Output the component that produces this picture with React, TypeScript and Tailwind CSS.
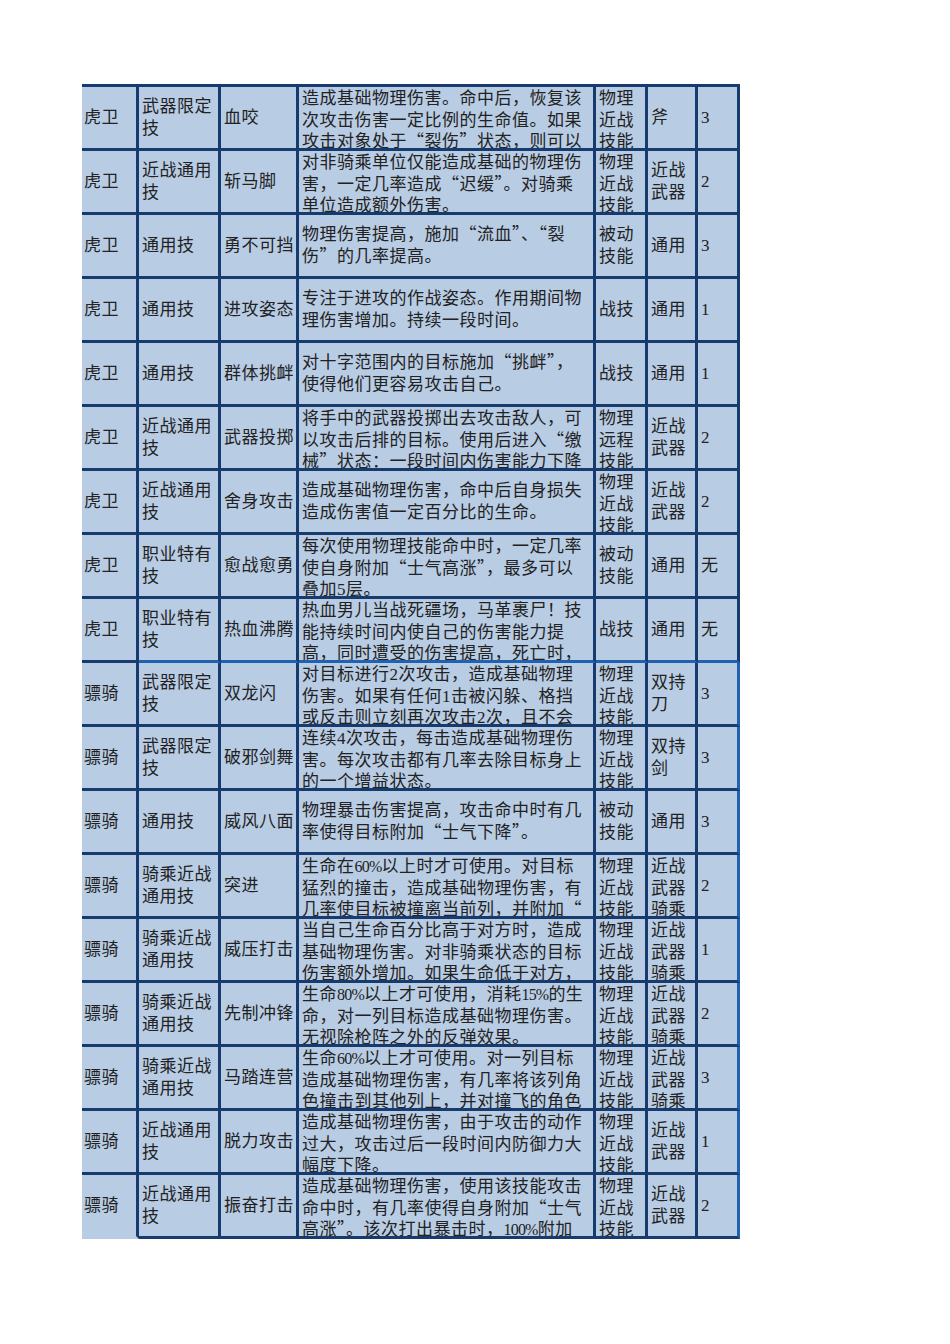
import React from "react";

type Row = {
  a: string;
  b: string[];
  c: string;
  d: string[];
  e: string[];
  f: string[];
  g: string;
};

const rows: Row[] = [
  { a: "虎卫", b: ["武器限定", "技"], c: "血咬", d: ["造成基础物理伤害。命中后，恢复该", "次攻击伤害一定比例的生命值。如果", "攻击对象处于“裂伤”状态，则可以"], e: ["物理", "近战", "技能"], f: ["斧"], g: "3" },
  { a: "虎卫", b: ["近战通用", "技"], c: "斩马脚", d: ["对非骑乘单位仅能造成基础的物理伤", "害，一定几率造成“迟缓”。对骑乘", "单位造成额外伤害。"], e: ["物理", "近战", "技能"], f: ["近战", "武器"], g: "2" },
  { a: "虎卫", b: ["通用技"], c: "勇不可挡", d: ["物理伤害提高，施加“流血”、“裂", "伤”的几率提高。"], e: ["被动", "技能"], f: ["通用"], g: "3" },
  { a: "虎卫", b: ["通用技"], c: "进攻姿态", d: ["专注于进攻的作战姿态。作用期间物", "理伤害增加。持续一段时间。"], e: ["战技"], f: ["通用"], g: "1" },
  { a: "虎卫", b: ["通用技"], c: "群体挑衅", d: ["对十字范围内的目标施加“挑衅”，", "使得他们更容易攻击自己。"], e: ["战技"], f: ["通用"], g: "1" },
  { a: "虎卫", b: ["近战通用", "技"], c: "武器投掷", d: ["将手中的武器投掷出去攻击敌人，可", "以攻击后排的目标。使用后进入“缴", "械”状态：一段时间内伤害能力下降"], e: ["物理", "远程", "技能"], f: ["近战", "武器"], g: "2" },
  { a: "虎卫", b: ["近战通用", "技"], c: "舍身攻击", d: ["造成基础物理伤害，命中后自身损失", "造成伤害值一定百分比的生命。"], e: ["物理", "近战", "技能"], f: ["近战", "武器"], g: "2" },
  { a: "虎卫", b: ["职业特有", "技"], c: "愈战愈勇", d: ["每次使用物理技能命中时，一定几率", "使自身附加“士气高涨”，最多可以", "叠加5层。"], e: ["被动", "技能"], f: ["通用"], g: "无" },
  { a: "虎卫", b: ["职业特有", "技"], c: "热血沸腾", d: ["热血男儿当战死疆场，马革裹尸！技", "能持续时间内使自己的伤害能力提", "高，同时遭受的伤害提高，死亡时，"], e: ["战技"], f: ["通用"], g: "无" },
  { a: "骠骑", b: ["武器限定", "技"], c: "双龙闪", d: ["对目标进行2次攻击，造成基础物理", "伤害。如果有任何1击被闪躲、格挡", "或反击则立刻再次攻击2次，且不会"], e: ["物理", "近战", "技能"], f: ["双持", "刀"], g: "3" },
  { a: "骠骑", b: ["武器限定", "技"], c: "破邪剑舞", d: ["连续4次攻击，每击造成基础物理伤", "害。每次攻击都有几率去除目标身上", "的一个增益状态。"], e: ["物理", "近战", "技能"], f: ["双持", "剑"], g: "3" },
  { a: "骠骑", b: ["通用技"], c: "威风八面", d: ["物理暴击伤害提高，攻击命中时有几", "率使得目标附加“士气下降”。"], e: ["被动", "技能"], f: ["通用"], g: "3" },
  { a: "骠骑", b: ["骑乘近战", "通用技"], c: "突进", d: ["生命在60%以上时才可使用。对目标", "猛烈的撞击，造成基础物理伤害，有", "几率使目标被撞离当前列，并附加“"], e: ["物理", "近战", "技能"], f: ["近战", "武器", "骑乘"], g: "2" },
  { a: "骠骑", b: ["骑乘近战", "通用技"], c: "威压打击", d: ["当自己生命百分比高于对方时，造成", "基础物理伤害。对非骑乘状态的目标", "伤害额外增加。如果生命低于对方，"], e: ["物理", "近战", "技能"], f: ["近战", "武器", "骑乘"], g: "1" },
  { a: "骠骑", b: ["骑乘近战", "通用技"], c: "先制冲锋", d: ["生命80%以上才可使用，消耗15%的生", "命，对一列目标造成基础物理伤害。", "无视除枪阵之外的反弹效果。"], e: ["物理", "近战", "技能"], f: ["近战", "武器", "骑乘"], g: "2" },
  { a: "骠骑", b: ["骑乘近战", "通用技"], c: "马踏连营", d: ["生命60%以上才可使用。对一列目标", "造成基础物理伤害，有几率将该列角", "色撞击到其他列上，并对撞飞的角色"], e: ["物理", "近战", "技能"], f: ["近战", "武器", "骑乘"], g: "3" },
  { a: "骠骑", b: ["近战通用", "技"], c: "脱力攻击", d: ["造成基础物理伤害，由于攻击的动作", "过大，攻击过后一段时间内防御力大", "幅度下降。"], e: ["物理", "近战", "技能"], f: ["近战", "武器"], g: "1" },
  { a: "骠骑", b: ["近战通用", "技"], c: "振奋打击", d: ["造成基础物理伤害，使用该技能攻击", "命中时，有几率使得自身附加“士气", "高涨”。该次打出暴击时，100%附加"], e: ["物理", "近战", "技能"], f: ["近战", "武器"], g: "2" },
];

const cjk = { fontFamily: '"Noto Sans CJK SC", sans-serif' };

function Line({ text }: { text: string }) {
  const parts = text.split(/([“”]|\d+%)/);
  return (
    <div className="h-[21.5px] shrink-0 whitespace-nowrap leading-[21.5px]">
      {parts.map((p, i) =>
        p === "“" || p === "”" ? (
          <span key={i} style={cjk} className="leading-[0px]">
            {p}
          </span>
        ) : /^\d+%$/.test(p) ? (
          <span key={i} className="text-[16px] tracking-[-0.8px]">
            {p}
          </span>
        ) : (
          <React.Fragment key={i}>{p}</React.Fragment>
        )
      )}
    </div>
  );
}

function Cell({
  lines,
  className,
  right = "border-r-[#183b6f]",
  bottom = "border-b-[#183b6f]",
}: {
  lines: string[];
  className: string;
  right?: string;
  bottom?: string;
}) {
  const tall = lines.length >= 3;
  return (
    <div
      className={`${className} h-[64px] overflow-hidden bg-[#b8cce4] border-r-[3px] border-b-[3px] ${right} ${bottom} flex flex-col ${
        tall ? "justify-start pt-[1px]" : "justify-center"
      }`}
    >
      {lines.map((l, i) => (
        <Line key={i} text={l} />
      ))}
    </div>
  );
}

export default function App() {
  return (
    <div className="min-h-[1344px] w-[950px] bg-white pt-[84px] pl-[82px]">
      <div
        lang="zh-CN"
        className="w-[658px] border-t-[3px] border-t-[#183b6f] text-[17px] tracking-[0.5px] text-[#222222]"
        style={{ fontFamily: '"Liberation Serif", "Noto Sans CJK SC", serif' }}
      >
        {rows.map((r, i) => {
          const sectionEnd = i === 8;
          const lower = i >= 9;
          const last = i === rows.length - 1;
          const bottomLine = sectionEnd ? "border-b-[#2162b0]" : "border-b-[#183b6f]";
          return (
            <div key={i} className="grid grid-cols-[57px_82px_78px_297px_52px_50px_42px]">
              <Cell
                lines={[r.a]}
                className="pl-[2px]"
                bottom={last ? "border-b-[#b8cce4]" : "border-b-[#183b6f]"}
              />
              <Cell lines={r.b} className="pl-[3px]" bottom={bottomLine} />
              <Cell lines={[r.c]} className="pl-[3px]" bottom={bottomLine} />
              <Cell lines={r.d} className="pl-[3px]" bottom={bottomLine} />
              <Cell lines={r.e} className="pl-[3px]" bottom={bottomLine} />
              <Cell lines={r.f} className="pl-[3px]" bottom={bottomLine} />
              <Cell
                lines={[r.g]}
                className="pl-[3px]"
                bottom={bottomLine}
                right={lower ? "border-r-[#2162b0]" : "border-r-[#183b6f]"}
              />
            </div>
          );
        })}
      </div>
    </div>
  );
}
